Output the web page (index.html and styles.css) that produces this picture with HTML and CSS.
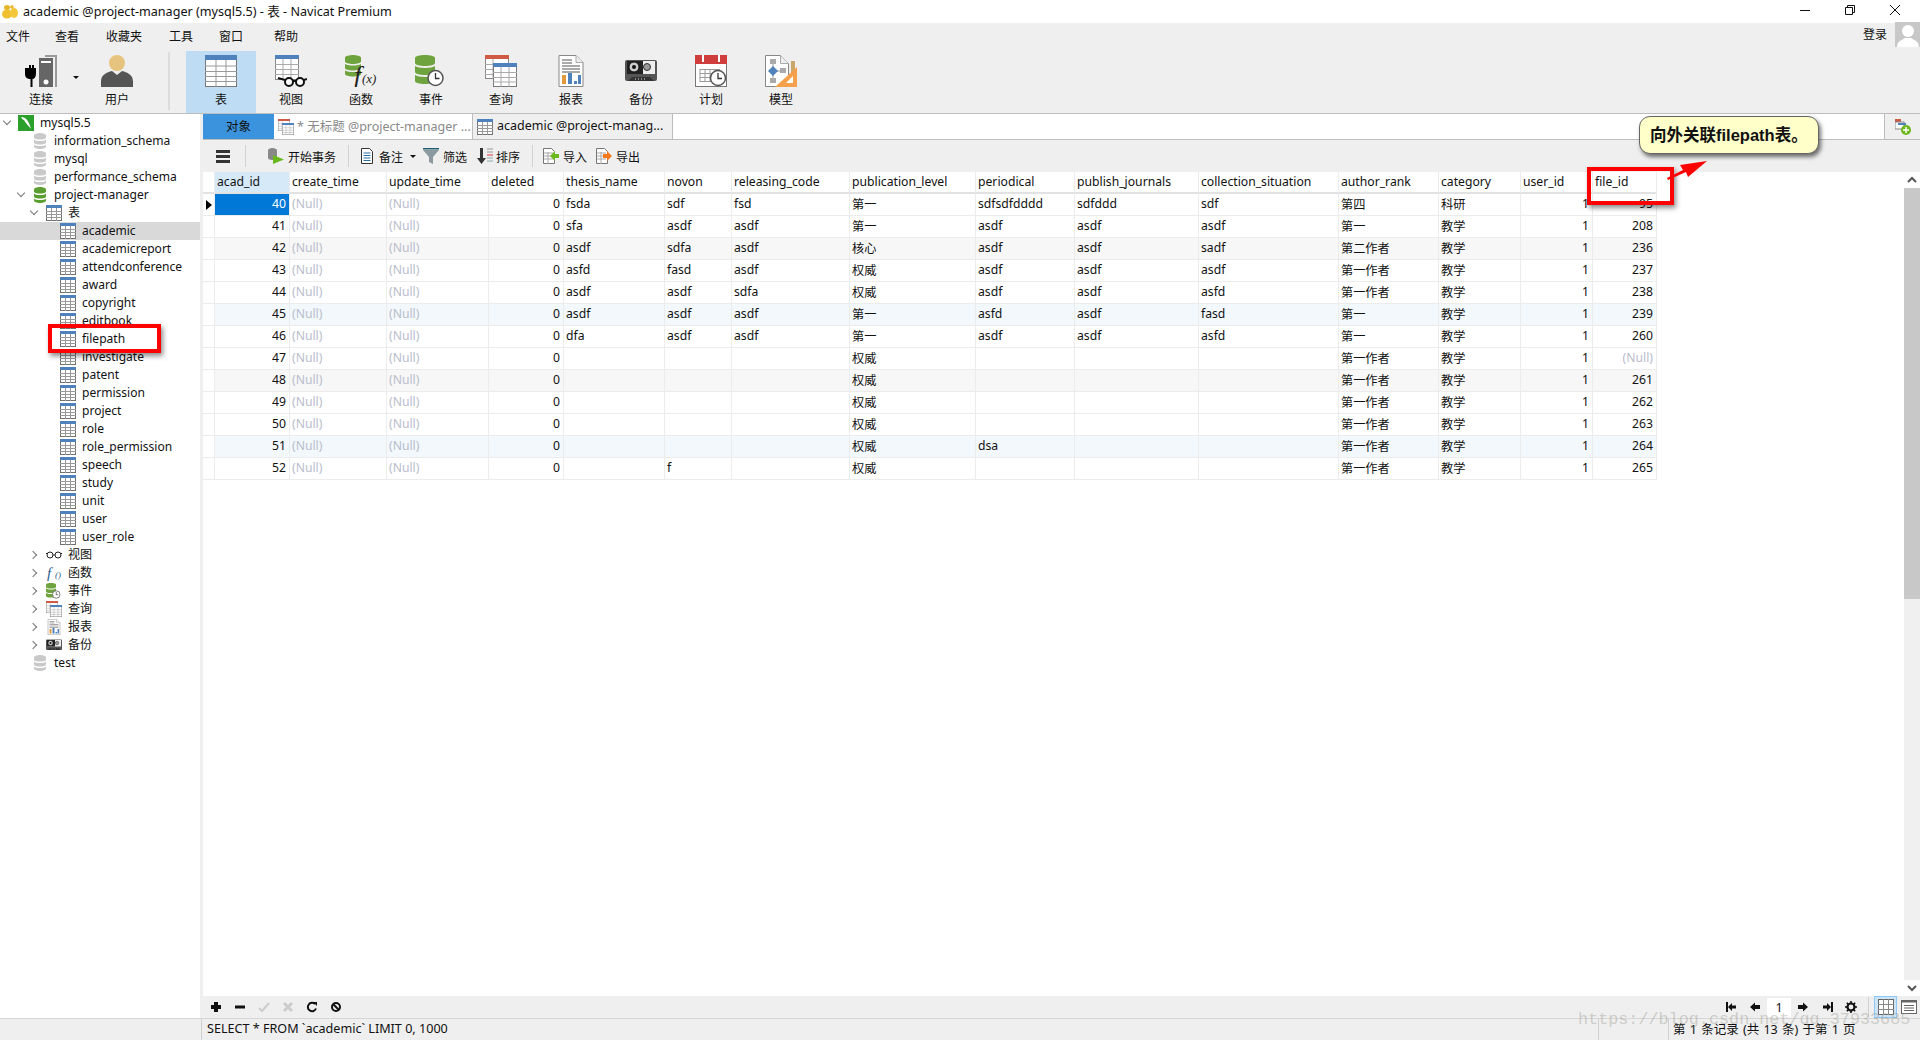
FILE: index.html
```html
<!DOCTYPE html>
<html lang="zh">
<head>
<meta charset="utf-8">
<title>academic @project-manager (mysql5.5) - 表 - Navicat Premium</title>
<link rel="stylesheet" href="styles.css">
</head>
<body>
<svg class="sprite" xmlns="http://www.w3.org/2000/svg">
  <symbol id="i-table" viewBox="0 0 32 32">
    <rect x=".5" y=".5" width="31" height="31" fill="#fff" stroke="#777"/>
    <rect width="32" height="5" fill="#4f81bd"/>
    <path d="M0 11h32M0 16.500h32M0 21.500h32M0 26.500h32M11 5v27M21 5v27" stroke="#999" fill="none"/>
  </symbol>
  <symbol id="i-t16" viewBox="0 0 16 16">
    <rect x=".5" y=".5" width="15" height="15" fill="#fff" stroke="#707070"/>
    <rect width="16" height="3" fill="#4f81bd"/>
    <path d="M0 6.500h16M0 9.500h16M0 12.500h16M5.500 3v13M10.500 3v13" stroke="#999" fill="none"/>
  </symbol>
  <symbol id="i-db" viewBox="0 0 12 16">
    <path d="M0 2.500C0 1 3 0 6 0s6 1 6 2.500v2C12 6 9 6.500 6 6.500S0 6 0 4.500zM0 6.500C1 7.500 3 8 6 8s5-.5 6-1.500v3C12 11 9 11.500 6 11.500S0 11 0 9.500zM0 11.500C1 12.500 3 13 6 13s5-.5 6-1.500v2C12 15 9 16 6 16s-6-1-6-2.500z" fill="currentColor"/>
  </symbol>
  <symbol id="i-conn" viewBox="0 0 32 32">
    <rect x="14" y="3" width="14" height="29" fill="#666"/>
    <path d="M32 0H20v2h10v30h2z" fill="#999"/>
    <rect x="16" y="6" width="10" height="2" fill="#fff"/>
    <circle cx="21" cy="27" r="2.500" fill="#fff"/>
    <path d="M2 13h2v-2h0v-1h2v3h1v-3h2v3h2v6c0 3-2 5-3.500 5v8h-2v-8C2 24 0 22 0 19v-6z" fill="#000"/>
  </symbol>
  <symbol id="i-user" viewBox="0 0 32 32">
    <circle cx="16" cy="8" r="8" fill="#e6c47f"/>
    <path d="M0 32v-6c0-6 6-9 11-10l5 4 5-4c5 1 11 4 11 10v6z" fill="#555"/>
  </symbol>
  <symbol id="i-view" viewBox="0 0 32 32">
    <rect x=".5" y=".5" width="23" height="24" fill="#fff" stroke="#888"/>
    <rect width="24" height="4" fill="#4f81bd"/>
    <path d="M0 9.500h24M0 14.500h24M0 19.500h24M8 4v21M16 4v21" stroke="#aaa" fill="none"/>
    <circle cx="14" cy="27" r="4" fill="#fff" stroke="#111" stroke-width="2"/>
    <circle cx="25" cy="27" r="4" fill="#fff" stroke="#111" stroke-width="2"/>
    <path d="M18 26h3M3 23l7 2M29 25l3-1" stroke="#111" stroke-width="2" fill="none"/>
  </symbol>
  <symbol id="i-func" viewBox="0 0 32 32">
    <path d="M0 2.500C0 1 5 0 8 0s8 1 8 2.500v4C16 8 12 9 8 9S0 8 0 6.500zM0 9c2 1 5 1.500 8 1.500S14 10 16 9v4c0 1.500-4 2.500-8 2.500S0 14.500 0 13zM0 15.500c2 1 5 1.500 8 1.500s6-.5 8-1.500V19c0 1.500-4 2.500-8 2.500S0 20.500 0 19z" fill="#6fa33e"/>
    <text x="9" y="29" class="svg-f">f</text>
    <text x="17" y="28" class="svg-x">(x)</text>
  </symbol>
  <symbol id="i-event" viewBox="0 0 32 32">
    <path d="M0 3C0 1 5 0 10 0s10 1 10 3v5c0 2-5 3-10 3S0 10 0 8zM0 11c2 1 5 2 10 2s8-1 10-2v6c0 2-5 3-10 3S0 19 0 17zM0 20c2 1 5 2 10 2s8-1 10-2v6c0 2-5 3-10 3S0 28 0 26z" fill="#6fa33e"/>
    <circle cx="20.500" cy="23" r="7.500" fill="#fff" stroke="#555" stroke-width="1.500"/>
    <path d="M20.500 18v5.500h4" stroke="#333" stroke-width="1.300" fill="none"/>
  </symbol>
  <symbol id="i-query" viewBox="0 0 32 32">
    <rect x=".5" y=".5" width="23" height="23" fill="#fff" stroke="#888"/>
    <rect width="24" height="4" fill="#cf5a45"/>
    <path d="M0 9.500h8M0 14.500h8M0 19.500h8M8 4v20" stroke="#aaa" fill="none"/>
    <rect x="8.500" y="8.500" width="23" height="23" fill="#fff" stroke="#777"/>
    <rect x="8" y="8" width="24" height="4" fill="#4f81bd"/>
    <path d="M8 17.500h24M8 22.500h24M8 27h24M16 12v20M24 12v20" stroke="#aaa" fill="none"/>
  </symbol>
  <symbol id="i-report" viewBox="0 0 32 32">
    <path d="M1.500.5h17l7 7v24h-24z" fill="#fff" stroke="#888" transform="translate(2.500)"/>
    <path d="M21 .5v7h7" fill="#eee" stroke="#aaa"/>
    <path d="M7 5h10M7 8h10M7 11h18M7 14h18M7 17h18" stroke="#555" fill="none"/>
    <rect x="7" y="20" width="4" height="9" fill="#e39a3b"/>
    <rect x="13" y="18" width="4" height="11" fill="#4f81bd"/>
    <rect x="19" y="26" width="3" height="3" fill="#4f81bd"/>
    <rect x="23" y="20" width="3" height="9" fill="#4f81bd"/>
  </symbol>
  <symbol id="i-backup" viewBox="0 0 32 32">
    <rect y="5" width="32" height="21" rx="2" fill="#555"/>
    <rect x="2" y="6" width="28" height="13" fill="#eee"/>
    <rect x="2" y="6" width="16" height="13" fill="#222"/>
    <circle cx="9" cy="12" r="5" fill="#ccc" stroke="#111"/>
    <circle cx="9" cy="12" r="2" fill="#111"/>
    <circle cx="22" cy="12" r="3.500" fill="#999" stroke="#333"/>
    <path d="M3 26l4-4h18l4 4z" fill="#333"/>
    <path d="M10 24h12" stroke="#ddd" stroke-dasharray="1 2" fill="none"/>
  </symbol>
  <symbol id="i-sched" viewBox="0 0 32 32">
    <rect x=".5" y=".5" width="31" height="31" fill="#fff" stroke="#777"/>
    <rect width="32" height="9" fill="#cf3d3d"/>
    <path d="M8 0v7M24 0v7" stroke="#fff" stroke-width="2" fill="none"/>
    <path d="M5 14.500h20M5 18.500h20M5 22.500h20M5 26.500h14M5 14v13M10 14v13M15 14v13M20 14v10" stroke="#999" fill="none"/>
    <circle cx="23" cy="23" r="7.500" fill="#fff" stroke="#555" stroke-width="1.500"/>
    <path d="M23 18v5.500h4" stroke="#333" stroke-width="1.300" fill="none"/>
  </symbol>
  <symbol id="i-model" viewBox="0 0 32 32">
    <path d="M.5.500h15l8 8v23H.5z" fill="#fff" stroke="#888"/>
    <path d="M15.500.5v8h8" fill="#eee" stroke="#aaa"/>
    <rect x="5" y="4" width="6" height="5" fill="#aaa"/>
    <rect x="5" y="23" width="6" height="5" fill="#aaa"/>
    <path d="M8 9v14M8 16h12" stroke="#999" fill="none"/>
    <path d="M8 11l5 5-5 5-5-5z" fill="#4f81bd"/>
    <rect x="15" y="13" width="6" height="5" fill="#aaa"/>
    <rect x="26" y="6" width="4" height="16" fill="#c9a66b"/>
    <path d="M32 12v20H10z" fill="#f5a04c"/>
    <path d="M28 21v7h-7z" fill="#fff"/>
  </symbol>
</svg>

<div class="app">
  <header class="titlebar">
    <svg class="appicon" viewBox="0 0 16 14"><ellipse cx="5" cy="9" rx="5" ry="4.500" fill="#f0c030"/><ellipse cx="12" cy="8" rx="4" ry="5" fill="#f3c83a"/><ellipse cx="5" cy="2.500" rx="3" ry="2.500" fill="#e7b528"/><circle cx="10" cy="2" r="1.800" fill="#e7b528"/></svg>
    <span class="titletext">academic @project-manager (mysql5.5) - 表 - Navicat Premium</span>
    <div class="winbtns">
      <svg class="winicon" viewBox="0 0 10 10"><path d="M0 5.500h10" stroke="#111" fill="none"/></svg>
      <svg class="winicon" viewBox="0 0 10 10"><path d="M.5 2.500h7v7h-7zM2.500 2V.5h7v7H8" stroke="#111" fill="none"/></svg>
      <svg class="winicon" viewBox="0 0 10 10"><path d="M0 0l10 10M10 0L0 10" stroke="#111" fill="none"/></svg>
    </div>
  </header>

  <div class="ribbon">
    <nav class="menubar">
      <span class="menu-first">文件</span><span>查看</span><span>收藏夹</span><span>工具</span><span class="menu-win">窗口</span><span class="menu-last">帮助</span>
      <div class="login">
        <span>登录</span>
        <svg class="avatar" viewBox="0 0 25 25"><rect width="25" height="25" fill="#c8c8c8"/><circle cx="13" cy="9" r="6" fill="#fff"/><path d="M2 25c0-6 5-7 8-9h6c3 2 8 3 8 9z" fill="#fff"/></svg>
      </div>
    </nav>
    <div class="tools">
      <div class="tool tool-conn"><svg class="ic32"><use href="#i-conn"/></svg><span>连接</span><i class="conn-caret"></i></div>
      <div class="tool tool-user"><svg class="ic32"><use href="#i-user"/></svg><span>用户</span></div>
      <div class="tool-sep"></div>
      <div class="tool tool-on"><svg class="ic32"><use href="#i-table"/></svg><span>表</span></div>
      <div class="tool"><svg class="ic32"><use href="#i-view"/></svg><span>视图</span></div>
      <div class="tool"><svg class="ic32"><use href="#i-func"/></svg><span>函数</span></div>
      <div class="tool"><svg class="ic32"><use href="#i-event"/></svg><span>事件</span></div>
      <div class="tool"><svg class="ic32"><use href="#i-query"/></svg><span>查询</span></div>
      <div class="tool"><svg class="ic32"><use href="#i-report"/></svg><span>报表</span></div>
      <div class="tool"><svg class="ic32"><use href="#i-backup"/></svg><span>备份</span></div>
      <div class="tool"><svg class="ic32"><use href="#i-sched"/></svg><span>计划</span></div>
      <div class="tool"><svg class="ic32"><use href="#i-model"/></svg><span>模型</span></div>
    </div>
  </div>

  <div class="main">
    <aside class="tree">
      <div class="node"><i class="chev chev-open lv0"></i><svg class="ic-conn" viewBox="0 0 16 16"><rect width="16" height="16" fill="#2ca02c"/><path d="M3 2c5 0 8 4 10 12-3-4-5-5-7-9-1 0-2-1-3-3z" fill="#fff"/></svg><span>mysql5.5</span></div>
      <div class="node node-db"><svg class="ic-db gray"><use href="#i-db"/></svg><span>information_schema</span></div>
      <div class="node node-db"><svg class="ic-db gray"><use href="#i-db"/></svg><span>mysql</span></div>
      <div class="node node-db"><svg class="ic-db gray"><use href="#i-db"/></svg><span>performance_schema</span></div>
      <div class="node node-db-open"><i class="chev chev-open lv1"></i><svg class="ic-db green"><use href="#i-db"/></svg><span>project-manager</span></div>
      <div class="node node-grp"><i class="chev chev-open"></i><svg class="ic16"><use href="#i-t16"/></svg><span>表</span></div>
      <div class="node node-tbl node-sel"><svg class="ic16"><use href="#i-t16"/></svg><span>academic</span></div>
      <div class="node node-tbl"><svg class="ic16"><use href="#i-t16"/></svg><span>academicreport</span></div>
      <div class="node node-tbl"><svg class="ic16"><use href="#i-t16"/></svg><span>attendconference</span></div>
      <div class="node node-tbl"><svg class="ic16"><use href="#i-t16"/></svg><span>award</span></div>
      <div class="node node-tbl"><svg class="ic16"><use href="#i-t16"/></svg><span>copyright</span></div>
      <div class="node node-tbl"><svg class="ic16"><use href="#i-t16"/></svg><span>editbook</span></div>
      <div class="node node-tbl"><svg class="ic16"><use href="#i-t16"/></svg><span>filepath</span></div>
      <div class="node node-tbl"><svg class="ic16"><use href="#i-t16"/></svg><span>investigate</span></div>
      <div class="node node-tbl"><svg class="ic16"><use href="#i-t16"/></svg><span>patent</span></div>
      <div class="node node-tbl"><svg class="ic16"><use href="#i-t16"/></svg><span>permission</span></div>
      <div class="node node-tbl"><svg class="ic16"><use href="#i-t16"/></svg><span>project</span></div>
      <div class="node node-tbl"><svg class="ic16"><use href="#i-t16"/></svg><span>role</span></div>
      <div class="node node-tbl"><svg class="ic16"><use href="#i-t16"/></svg><span>role_permission</span></div>
      <div class="node node-tbl"><svg class="ic16"><use href="#i-t16"/></svg><span>speech</span></div>
      <div class="node node-tbl"><svg class="ic16"><use href="#i-t16"/></svg><span>study</span></div>
      <div class="node node-tbl"><svg class="ic16"><use href="#i-t16"/></svg><span>unit</span></div>
      <div class="node node-tbl"><svg class="ic16"><use href="#i-t16"/></svg><span>user</span></div>
      <div class="node node-tbl"><svg class="ic16"><use href="#i-t16"/></svg><span>user_role</span></div>
      <div class="node node-grp"><i class="chev chev-closed"></i><svg class="ic16" viewBox="0 0 16 16"><circle cx="4" cy="8" r="3" fill="#fff" stroke="#222"/><circle cx="12" cy="8" r="3" fill="#fff" stroke="#222"/><path d="M7 8h2M1 7L0 6M15 7l1-1" stroke="#222" fill="none"/></svg><span>视图</span></div>
      <div class="node node-grp"><i class="chev chev-closed"></i><svg class="ic16" viewBox="0 0 16 16"><text x="1" y="13" class="svg-f16">f</text><text x="9" y="13" class="svg-p16">()</text></svg><span>函数</span></div>
      <div class="node node-grp"><i class="chev chev-closed"></i><svg class="ic16"><use href="#i-event"/></svg><span>事件</span></div>
      <div class="node node-grp"><i class="chev chev-closed"></i><svg class="ic16"><use href="#i-query"/></svg><span>查询</span></div>
      <div class="node node-grp"><i class="chev chev-closed"></i><svg class="ic16"><use href="#i-report"/></svg><span>报表</span></div>
      <div class="node node-grp"><i class="chev chev-closed"></i><svg class="ic16"><use href="#i-backup"/></svg><span>备份</span></div>
      <div class="node node-db"><svg class="ic-db gray"><use href="#i-db"/></svg><span>test</span></div>
    </aside>

    <section class="content">
      <div class="tabbar">
        <div class="tab tab-obj"><span>对象</span></div>
        <div class="tab tab-draft"><svg class="ic16"><use href="#i-query"/></svg><span>* 无标题 @project-manager ...</span></div>
        <div class="tab tab-cur"><svg class="ic16"><use href="#i-t16"/></svg><span>academic @project-manag...</span></div>
        <div class="tab-rest"></div>
        <div class="tab-add"><svg class="ic16" viewBox="0 0 16 16"><rect x="0" y="0" width="6" height="3" fill="#cf5a45"/><rect x="0" y="3" width="9" height="7" fill="#fff" stroke="#888"/><rect x="3" y="4" width="8" height="2" fill="#4f81bd"/><circle cx="11" cy="11" r="5" fill="#6cb81e"/><path d="M11 8v6M8 11h6" stroke="#fff" stroke-width="1.500" fill="none"/></svg></div>
      </div>

      <div class="subbar">
        <svg class="hamb" viewBox="0 0 14 13"><path d="M0 0h14v3H0zM0 5h14v3H0zM0 10h14v3H0z" fill="#333"/></svg>
        <i class="sub-sep sep-a"></i>
        <div class="sub sub-tx"><svg class="ic16" viewBox="0 0 16 16"><path d="M0 2c0-1 2-2 4-2s5 1 5 2v8c0 1-3 2-5 2s-4-1-4-2z" fill="#888"/><path d="M5 7l11 4.500L5 16z" fill="#69b81c"/></svg><span>开始事务</span></div>
        <i class="sub-sep sep-b"></i>
        <div class="sub sub-note"><svg class="ic16" viewBox="0 0 16 16"><path d="M2.500.5h8l3 3v12h-11z" fill="#fff" stroke="#333"/><path d="M4.500 5h7M4.500 7.500h7M4.500 10h7M4.500 12.500h7" stroke="#2a6ea8" fill="none"/></svg><span>备注</span><i class="caret"></i></div>
        <div class="sub sub-filter"><svg class="ic16" viewBox="0 0 16 16"><path d="M0 0h16v1.500H0z" fill="#1f5d73"/><path d="M0 2h16l-6 7v7l-4-2V9z" fill="#8a9aa0"/></svg><span>筛选</span></div>
        <div class="sub sub-sort"><svg class="ic16" viewBox="0 0 16 16"><path d="M3 0h3v10h3l-4.500 6L0 10h3z" fill="#333"/><path d="M10 1h6M10 4h6" stroke="#999" fill="none"/><path d="M10 7h6" stroke="#d33" fill="none"/><path d="M10 10h6M10 13h6" stroke="#8aa" fill="none"/></svg><span>排序</span></div>
        <i class="sub-sep sep-c"></i>
        <div class="sub sub-imp"><svg class="ic16" viewBox="0 0 16 16"><path d="M.5.500h8l3 3v12H.5z" fill="#fff" stroke="#777"/><path d="M1 5h9M1 8h9M1 11h9M5 4v12" stroke="#aaa" fill="none"/><path d="M7 8l5-5v3h4v4h-4v3z" fill="#6cb81e"/></svg><span>导入</span></div>
        <div class="sub sub-exp"><svg class="ic16" viewBox="0 0 16 16"><path d="M.5.500h8l3 3v12H.5z" fill="#fff" stroke="#777"/><path d="M1 5h9M1 8h9M1 11h9M5 4v12" stroke="#aaa" fill="none"/><path d="M16 8l-5-5v3H7v4h4v3z" fill="#f47a1f"/></svg><span>导出</span></div>
      </div>

      <div class="gridwrap">
        <div class="gridpane">
          <table class="grid">
            <colgroup><col><col><col><col><col><col><col><col><col><col><col><col><col><col><col><col></colgroup>
            <thead>
              <tr><th class="mark"></th><th class="hd-on">acad_id</th><th>create_time</th><th>update_time</th><th>deleted</th><th>thesis_name</th><th>novon</th><th>releasing_code</th><th>publication_level</th><th>periodical</th><th>publish_journals</th><th>collection_situation</th><th>author_rank</th><th>category</th><th>user_id</th><th>file_id</th></tr>
            </thead>
            <tbody>
              <tr><td class="mark"><i class="cursor"></i></td><td class="num cell-sel">40</td><td class="nul">(Null)</td><td class="nul">(Null)</td><td class="num">0</td><td>fsda</td><td>sdf</td><td>fsd</td><td>第一</td><td>sdfsdfdddd</td><td>sdfddd</td><td>sdf</td><td>第四</td><td>科研</td><td class="num">1</td><td class="num">95</td></tr>
              <tr><td class="mark"></td><td class="num">41</td><td class="nul">(Null)</td><td class="nul">(Null)</td><td class="num">0</td><td>sfa</td><td>asdf</td><td>asdf</td><td>第一</td><td>asdf</td><td>asdf</td><td>asdf</td><td>第一</td><td>教学</td><td class="num">1</td><td class="num">208</td></tr>
              <tr class="alt-g"><td class="mark"></td><td class="num">42</td><td class="nul">(Null)</td><td class="nul">(Null)</td><td class="num">0</td><td>asdf</td><td>sdfa</td><td>asdf</td><td>核心</td><td>asdf</td><td>asdf</td><td>sadf</td><td>第二作者</td><td>教学</td><td class="num">1</td><td class="num">236</td></tr>
              <tr><td class="mark"></td><td class="num">43</td><td class="nul">(Null)</td><td class="nul">(Null)</td><td class="num">0</td><td>asfd</td><td>fasd</td><td>asdf</td><td>权威</td><td>asdf</td><td>asdf</td><td>asdf</td><td>第一作者</td><td>教学</td><td class="num">1</td><td class="num">237</td></tr>
              <tr><td class="mark"></td><td class="num">44</td><td class="nul">(Null)</td><td class="nul">(Null)</td><td class="num">0</td><td>asdf</td><td>asdf</td><td>sdfa</td><td>权威</td><td>asdf</td><td>asdf</td><td>asfd</td><td>第一作者</td><td>教学</td><td class="num">1</td><td class="num">238</td></tr>
              <tr class="alt-b"><td class="mark"></td><td class="num">45</td><td class="nul">(Null)</td><td class="nul">(Null)</td><td class="num">0</td><td>asdf</td><td>asdf</td><td>asdf</td><td>第一</td><td>asfd</td><td>asdf</td><td>fasd</td><td>第一</td><td>教学</td><td class="num">1</td><td class="num">239</td></tr>
              <tr><td class="mark"></td><td class="num">46</td><td class="nul">(Null)</td><td class="nul">(Null)</td><td class="num">0</td><td>dfa</td><td>asdf</td><td>asdf</td><td>第一</td><td>asdf</td><td>asdf</td><td>asfd</td><td>第一</td><td>教学</td><td class="num">1</td><td class="num">260</td></tr>
              <tr><td class="mark"></td><td class="num">47</td><td class="nul">(Null)</td><td class="nul">(Null)</td><td class="num">0</td><td></td><td></td><td></td><td>权威</td><td></td><td></td><td></td><td>第一作者</td><td>教学</td><td class="num">1</td><td class="nul num">(Null)</td></tr>
              <tr class="alt-g"><td class="mark"></td><td class="num">48</td><td class="nul">(Null)</td><td class="nul">(Null)</td><td class="num">0</td><td></td><td></td><td></td><td>权威</td><td></td><td></td><td></td><td>第一作者</td><td>教学</td><td class="num">1</td><td class="num">261</td></tr>
              <tr><td class="mark"></td><td class="num">49</td><td class="nul">(Null)</td><td class="nul">(Null)</td><td class="num">0</td><td></td><td></td><td></td><td>权威</td><td></td><td></td><td></td><td>第一作者</td><td>教学</td><td class="num">1</td><td class="num">262</td></tr>
              <tr><td class="mark"></td><td class="num">50</td><td class="nul">(Null)</td><td class="nul">(Null)</td><td class="num">0</td><td></td><td></td><td></td><td>权威</td><td></td><td></td><td></td><td>第一作者</td><td>教学</td><td class="num">1</td><td class="num">263</td></tr>
              <tr class="alt-b"><td class="mark"></td><td class="num">51</td><td class="nul">(Null)</td><td class="nul">(Null)</td><td class="num">0</td><td></td><td></td><td></td><td>权威</td><td>dsa</td><td></td><td></td><td>第一作者</td><td>教学</td><td class="num">1</td><td class="num">264</td></tr>
              <tr><td class="mark"></td><td class="num">52</td><td class="nul">(Null)</td><td class="nul">(Null)</td><td class="num">0</td><td></td><td>f</td><td></td><td>权威</td><td></td><td></td><td></td><td>第一作者</td><td>教学</td><td class="num">1</td><td class="num">265</td></tr>
            </tbody>
          </table>
        </div>
        <div class="scrollbar">
          <svg class="sb-arrow" viewBox="0 0 16 16"><path d="M4 10l4-4 4 4" stroke="#555" stroke-width="2" fill="none"/></svg>
          <div class="sb-thumb"></div>
          <div class="sb-track"></div>
          <svg class="sb-arrow" viewBox="0 0 16 16"><path d="M4 6l4 4 4-4" stroke="#555" stroke-width="2" fill="none"/></svg>
        </div>
      </div>

      <div class="gridfoot">
        <svg class="fic" viewBox="0 0 12 12"><path d="M4 1h4v3h3v4H8v3H4V8H1V4h3z" fill="#111"/></svg>
        <svg class="fic" viewBox="0 0 12 12"><path d="M1 4.500h10v3H1z" fill="#111"/></svg>
        <svg class="fic" viewBox="0 0 12 12"><path d="M1 7l3 3 7-8" stroke="#ccc" stroke-width="2" fill="none"/></svg>
        <svg class="fic" viewBox="0 0 12 12"><path d="M2 2l8 8M10 2l-8 8" stroke="#ccc" stroke-width="3" fill="none"/></svg>
        <svg class="fic" viewBox="0 0 12 12"><path d="M10 7.500A4.200 4.200 0 1 1 9 3" stroke="#111" stroke-width="2" fill="none"/><path d="M7 1h4v4z" fill="#111"/></svg>
        <svg class="fic" viewBox="0 0 12 12"><circle cx="6" cy="6" r="4" stroke="#111" stroke-width="2" fill="none"/><path d="M3 3l6 6" stroke="#111" stroke-width="2" fill="none"/></svg>
        <div class="pager">
          <svg class="pic pic-first" viewBox="0 0 12 12"><path d="M1 1h2v10H1zM3 6l4-4v2.500h4v3H7V10z" fill="#111"/></svg>
          <svg class="pic" viewBox="0 0 12 12"><path d="M1 6l5-4.500V4h5v4H6v2.500z" fill="#111"/></svg>
          <span class="pageno">1</span>
          <svg class="pic pic-next" viewBox="0 0 12 12"><path d="M11 6L6 1.500V4H1v4h5v2.500z" fill="#111"/></svg>
          <svg class="pic pic-last" viewBox="0 0 12 12"><path d="M11 1H9v10h2zM9 6L5 2v2.500H1v3h4V10z" fill="#111"/></svg>
          <svg class="pic" viewBox="0 0 12 12"><circle cx="6" cy="6" r="3.500" stroke="#111" stroke-width="2.200" fill="none"/><path d="M6 0v2M6 10v2M0 6h2M10 6h2M1.800 1.800l1.500 1.500M8.700 8.700l1.500 1.500M10.200 1.800L8.700 3.300M3.300 8.700l-1.500 1.500" stroke="#111" stroke-width="1.600" fill="none"/></svg>
          <i class="pager-sep"></i>
          <div class="viewbtn viewbtn-on"><svg class="ic16" viewBox="0 0 16 16"><rect x=".5" y=".5" width="15" height="15" fill="#fff" stroke="#666"/><path d="M0 5.500h16M0 10.500h16M5.500 0v16M10.500 0v16" stroke="#888" fill="none"/></svg></div>
          <div class="viewbtn"><svg class="ic16" viewBox="0 0 16 16"><rect x=".5" y="1.500" width="15" height="13" fill="#fff" stroke="#666"/><rect y="1" width="16" height="2.500" fill="#666"/><path d="M3 6.500h10M3 9h10M3 11.500h10" stroke="#666" fill="none"/></svg></div>
        </div>
      </div>
    </section>
  </div>

  <footer class="status">
    <div class="st st-left"></div>
    <div class="st st-sql"><span>SELECT * FROM `academic` LIMIT 0, 1000</span></div>
    <div class="st st-mid"></div>
    <div class="st st-rec"><span>第 1 条记录 (共 13 条) 于第 1 页</span></div>
  </footer>

  <div class="mark-box mark-file"></div>
  <div class="mark-box mark-col"></div>
  <div class="callout">向外关联filepath表。</div>
  <svg class="arrow" viewBox="0 0 44 22"><path d="M1 19L17 11 14 6 41 2 22 18 20 13 2 21z" fill="#f00"/></svg>
  <div class="wm">https://blog.csdn.net/qq_37933685</div>
</div>
</body>
</html>
```
FILE: styles.css
```css
* { box-sizing: border-box; }
html, body { margin: 0; padding: 0; height: 100%; overflow: hidden; }
body {
  font-family: "Noto Sans", "Noto Sans CJK SC", sans-serif;
  font-size: 12.5px;
  color: #111;
  background: #fff;
}
.sprite { display: none; }
.app { position: relative; display: flex; flex-direction: column; width: 1920px; height: 1040px; }

.titlebar { height: 23px; flex: none; display: flex; align-items: center; background: #fff; padding-left: 2px; }
.appicon { width: 16px; height: 14px; flex: none; }
.titletext { margin: 0 0 2px 5px; font-size: 12.6px; }
.winbtns { margin: 0 0 3px auto; display: flex; gap: 35px; padding-right: 20px; }
.winicon { width: 10px; height: 10px; display: block; }

.ribbon { flex: none; height: 91px; background: #efefef; border-bottom: 1px solid #bdbdbd; display: flex; flex-direction: column; }
.menubar { height: 28px; display: flex; align-items: center; gap: 27px; padding: 0 0 2px 6px; font-size: 12px; flex: none; }
.menu-first { margin-right: -2px; }
.menu-win { margin-left: -1px; }
.menu-last { margin-left: 4px; }
.login { margin-left: auto; display: flex; align-items: flex-start; gap: 8px; height: 28px; }
.login span { line-height: 25px; }
.avatar { width: 25px; height: 25px; display: block; }

.tools { display: flex; height: 62px; }
.tool { width: 70px; display: flex; flex-direction: column; align-items: center; padding-top: 4px; font-size: 12px; position: relative; }
.tool span { margin-top: 4px; line-height: 18px; }
.tool-conn { margin-left: 6px; }
.tool-user { margin-left: 6px; }
.tool-sep { width: 2px; height: 58px; background: #dcdcdc; margin: 1px 16px 0 16px; }
.tool-on { background: #bedcf3; }
.ic32 { width: 32px; height: 32px; display: block; flex: none; }
.conn-caret { position: absolute; right: -3px; top: 25px; border: 3px solid transparent; border-top: 3px solid #111; }

.main { flex: 1; display: flex; min-height: 0; }
.tree { width: 203px; flex: none; background: #fff; border-right: 3px solid #efefef; font-size: 12.05px; }
.node { height: 18px; display: flex; align-items: center; padding-left: 18px; white-space: nowrap; position: relative; }
.node span { margin: 0 0 2px 6px; }
.ic-conn { width: 16px; height: 16px; flex: none; }
.ic16 { width: 16px; height: 16px; display: block; flex: none; }
.ic-db { width: 12px; height: 16px; flex: none; display: block; }
.gray { color: #c9c9c9; }
.green { color: #5a9e2f; }
.node-db { padding-left: 34px; }
.node-db span { margin-left: 8px; }
.node-db-open { padding-left: 34px; }
.node-db-open span { margin-left: 8px; }
.node-grp { padding-left: 46px; }
.node-tbl { padding-left: 60px; }
.node-sel { background: #d9d9d9; }

.chev { position: absolute; width: 6px; height: 6px; border-right: 1.5px solid #777; border-bottom: 1.5px solid #777; }
.chev-open { transform: rotate(45deg); left: 31px; top: 4px; }
.chev-open.lv0 { left: 4px; }
.chev-open.lv1 { left: 18px; }
.chev-closed { transform: rotate(-45deg); left: 30px; top: 6px; }

.content { flex: 1; min-width: 0; display: flex; flex-direction: column; }
.tabbar { flex: none; height: 26px; display: flex; background: #fff; border-bottom: 1px solid #bdbdbd; }
.tab { display: flex; align-items: center; height: 25px; white-space: nowrap; }
.tab span { margin-bottom: 2px; }
.tab-obj { width: 71px; justify-content: center; background: #3b93dd; }
.tab-draft { width: 199px; padding-left: 4px; color: #8a8a8a; background: #fff; border-right: 1px solid #bdbdbd; }
.tab-draft span { margin-left: 3px; }
.tab-cur { width: 200px; padding-left: 4px; background: #efefef; border-right: 1px solid #bdbdbd; }
.tab-cur span { margin-left: 4px; }
.tab-rest { flex: 1; }
.tab-add { width: 36px; height: 25px; display: flex; align-items: center; justify-content: center; background: #efefef; border-left: 1px solid #bdbdbd; }

.subbar { flex: none; height: 32px; background: #efefef; display: flex; align-items: center; padding-left: 13px; white-space: nowrap; font-size: 12px; }
.hamb { width: 14px; height: 13px; flex: none; }
.sub { display: flex; align-items: center; }
.sub span { margin: 2px 0 0 4px; }
.sub-sep { width: 1px; height: 22px; background: #d2d2d2; flex: none; }
.sep-a { margin: 0 22px 0 15px; }
.sep-b { margin: 0 10px 0 12px; }
.sep-c { margin: 0 10px 0 12px; }
.caret { width: 0; height: 0; border: 3px solid transparent; border-top-color: #111; margin: 3px 0 0 7px; }
.sub-filter { margin-left: 7px; }
.sub-sort { margin-left: 10px; }
.sub-sort span { margin-left: 3px; }
.sub-exp { margin-left: 9px; }

.gridwrap { flex: 1; min-height: 0; display: flex; }
.gridpane { flex: 1; min-width: 0; background: #fff; overflow: hidden; }
.grid { table-layout: fixed; border-collapse: separate; border-spacing: 0; width: 1454px; font-size: 12.2px; }
.grid col:nth-child(1) { width: 12px; }
.grid col:nth-child(2) { width: 75px; }
.grid col:nth-child(3) { width: 97px; }
.grid col:nth-child(4) { width: 102px; }
.grid col:nth-child(5) { width: 75px; }
.grid col:nth-child(6) { width: 101px; }
.grid col:nth-child(7) { width: 67px; }
.grid col:nth-child(8) { width: 118px; }
.grid col:nth-child(9) { width: 126px; }
.grid col:nth-child(10) { width: 99px; }
.grid col:nth-child(11) { width: 124px; }
.grid col:nth-child(12) { width: 140px; }
.grid col:nth-child(13) { width: 100px; }
.grid col:nth-child(14) { width: 82px; }
.grid col:nth-child(15) { width: 72px; }
.grid col:nth-child(16) { width: 64px; }
.grid th, .grid td { height: 22px; padding: 0 3px 2px 2px; border-right: 1px solid #ececec; border-bottom: 1px solid #ececec; white-space: nowrap; overflow: hidden; font-weight: 400; text-align: left; }
.grid th { border-bottom: 2px solid #e2e2e2; }
.grid .hd-on { background: #d6e9f8; }
.grid .mark { padding: 0; background: #fff; }
.grid .num { text-align: right; }
.grid .nul { color: #b9bdcc; }
.grid .cell-sel { background: #0078d7; color: #fff; }
.alt-g td { background: #f7f7f7; }
.alt-b td { background: #f2f8fc; }
.cursor { display: block; width: 0; height: 0; margin-left: 3px; border: 5.5px solid transparent; border-left: 6px solid #000; }

.scrollbar { width: 16px; flex: none; display: flex; flex-direction: column; background: #f0f0f0; }
.sb-arrow { width: 16px; height: 16px; display: block; flex: none; background: #fff; }
.sb-thumb { height: 411px; background: #c8c8c8; flex: none; }
.sb-track { flex: 1; }

.gridfoot { flex: none; height: 22px; background: #efefef; display: flex; align-items: center; padding-left: 7px; gap: 12px; }
.fic { width: 12px; height: 12px; flex: none; }
.pager { margin-left: auto; display: flex; align-items: center; }
.pic { width: 12px; height: 12px; flex: none; margin-right: 16px; }
.pic-first { margin-right: 12px; }
.pic-next { margin-right: 13px; }
.pic-last { margin-right: 11px; }
.pageno { width: 24px; height: 19px; background: #fff; text-align: center; line-height: 19px; margin: 0 6px 0 -10px; }
.pager-sep { width: 1px; height: 20px; background: #d2d2d2; margin: 0 5px 0 -5px; }
.viewbtn { width: 23px; height: 22px; display: flex; align-items: center; justify-content: center; }
.viewbtn-on { background: #cde4f7; border: 1px solid #90c8f6; }

.status { flex: none; height: 22px; background: #efefef; border-top: 1px solid #d6d6d6; display: flex; align-items: stretch; }
.st { display: flex; align-items: center; white-space: nowrap; }
.st span { margin-bottom: 2px; }
.st-left { width: 202px; border-right: 1px solid #d0d0d0; }
.st-sql { width: 1397px; padding-left: 5px; border-right: 1px solid #d0d0d0; font-size: 12.6px; }
.st-mid { width: 70px; border-right: 1px solid #d0d0d0; }
.st-rec { padding-left: 4px; word-spacing: 1px; }

.mark-box { position: absolute; border: 4px solid #f00; box-shadow: 2px 3px 5px rgba(0,0,0,.45); }
.mark-file { left: 48px; top: 324px; width: 113px; height: 29px; }
.mark-col { left: 1587px; top: 167px; width: 87px; height: 38px; }
.callout { position: absolute; left: 1639px; top: 116px; width: 180px; height: 38px; padding-left: 10px; line-height: 37px; font-family: "Liberation Sans", "Noto Sans CJK SC", sans-serif; font-size: 16.5px; font-weight: 700; background: #ffffc9; border: 1px solid #666; border-radius: 11px; box-shadow: 2px 3px 4px rgba(0,0,0,.55); white-space: nowrap; }
.arrow { position: absolute; left: 1666px; top: 159px; width: 44px; height: 22px; }
.wm { position: absolute; left: 1578px; top: 1010px; font-family: "Liberation Mono", monospace; font-size: 16.8px; color: rgba(150,150,140,.4); white-space: nowrap; pointer-events: none; }

.svg-f { font: italic 26px "Liberation Serif", serif; fill: #222; }
.svg-x { font: italic 13px "Liberation Serif", serif; fill: #222; }
.svg-f16 { font: italic 15px "Liberation Serif", serif; fill: #2a5c8a; }
.svg-p16 { font: italic 9px "Liberation Serif", serif; fill: #2a5c8a; }
```
